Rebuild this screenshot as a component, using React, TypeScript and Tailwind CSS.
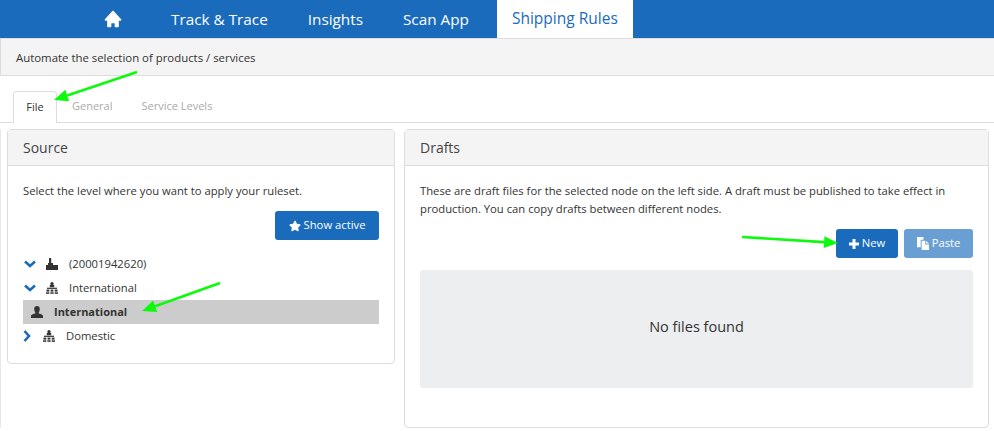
import { FaStar } from 'react-icons/fa';
import { BiSolidHome } from 'react-icons/bi';

const NAV = ['Track & Trace', 'Insights', 'Scan App'];

function Chevron({ open }: { open?: boolean }) {
  if (open) {
    return (
      <svg viewBox="0 0 12 8" className="ml-[1px] h-[8px] w-[12px] text-[#1a6bbb]" fill="none" stroke="currentColor" strokeWidth="2.6">
        <path d="M1 1.500l5 4.500 5-4.500" />
      </svg>
    );
  }
  return (
    <svg viewBox="0 0 8 12" className="h-[12px] w-[8px] text-[#1a6bbb]" fill="none" stroke="currentColor" strokeWidth="2.6">
      <path d="M1.500 1l4.500 5-4.500 5" />
    </svg>
  );
}

function FactoryIcon({ className }: { className?: string }) {
  return (
    <svg viewBox="0 0 12 12" className={className} fill="currentColor">
      <path d="M3 0h2.200v5H7v2h5v5H0V7h2V5h1z" />
    </svg>
  );
}

function TreeIcon({ className }: { className?: string }) {
  return (
    <svg viewBox="0 0 12 12" className={className} fill="currentColor">
      <circle cx="6" cy="1.600" r="1.600" />
      <rect x="3.800" y="2.800" width="4.400" height="2.400" />
      <rect x="1" y="5.700" width="10" height="1.200" />
      <rect x="0.500" y="7.600" width="2.800" height="2" />
      <rect x="4.600" y="7.600" width="2.800" height="2" />
      <rect x="8.700" y="7.600" width="2.800" height="2" />
      <rect x="0" y="10.300" width="3.300" height="1.500" />
      <rect x="4.350" y="10.300" width="3.300" height="1.500" />
      <rect x="8.700" y="10.300" width="3.300" height="1.500" />
    </svg>
  );
}

function UserIcon({ className }: { className?: string }) {
  return (
    <svg viewBox="0 0 12 12" className={className} fill="currentColor">
      <path d="M6 0c1.700 0 2.800 1.200 2.800 3S7.800 6.400 7.400 7.200c1.800.8 4.600 1 4.600 3V12H0v-1.800c0-2 2.800-2.200 4.600-3C4.200 6.400 3.200 4.800 3.200 3S4.300 0 6 0z" />
    </svg>
  );
}

function PlusIcon({ className }: { className?: string }) {
  return (
    <svg viewBox="0 0 10 10" className={className} fill="currentColor">
      <path d="M3.500 0h3v3.500H10v3H6.500V10h-3V6.500H0v-3h3.500z" />
    </svg>
  );
}

function PasteIcon({ className }: { className?: string }) {
  return (
    <svg viewBox="0 0 13 14" className={className} fill="currentColor">
      <path d="M0 0h7v3H4v8H0z" />
      <path d="M5 4h4v4h4v6H5z" />
      <path d="M10 4l3 3h-3z" />
    </svg>
  );
}

function Arrow({ x1, y1, x2, y2 }: { x1: number; y1: number; x2: number; y2: number }) {
  const a = Math.atan2(y2 - y1, x2 - x1);
  const len = 14;
  const w = 6;
  const bx = x2 - Math.cos(a) * len;
  const by = y2 - Math.sin(a) * len;
  const px = -Math.sin(a) * w;
  const py = Math.cos(a) * w;
  return (
    <g fill="#0dfa0d" stroke="#0dfa0d">
      <line x1={x1} y1={y1} x2={bx} y2={by} strokeWidth="2.6" />
      <polygon points={`${x2},${y2} ${bx + px},${by + py} ${bx - px},${by - py}`} strokeWidth="0" />
    </g>
  );
}

export default function App() {
  return (
    <div className="relative h-[431px] w-[994px] overflow-hidden bg-white text-[11.25px] text-[#333] font-['Open_Sans',sans-serif]">
      <nav className="flex h-[38px] bg-[#1a6bbb] pl-[84px] text-[15.3px] text-white">
        <a className="mr-[9px] flex w-[58px] items-center justify-center"><BiSolidHome className="h-[20px] w-[20px]" /></a>
        {NAV.map((n) => (
          <a key={n} className="flex items-center px-[20px]">{n}</a>
        ))}
        <a className="ml-[8px] flex items-center bg-white px-[15px] text-[15.5px] text-[#1a6bbb]">Shipping Rules</a>
      </nav>

      <div className="flex h-[38px] items-center border-y border-l border-[#ddd] bg-[#f4f4f4] pl-[15px] pt-[2px] text-[11.4px]">
        Automate the selection of products / services
      </div>

      <div className="mt-[15px] flex h-[32px] border-b border-[#ddd] pl-[13px] text-[11px]">
        <div className="flex h-[32px] w-[44px] items-center justify-center rounded-t border border-b-0 border-[#ddd] bg-white">File</div>
        <div className="flex items-center pl-[15px] text-[#aaa]">General</div>
        <div className="flex items-center pl-[29px] text-[#aaa]">Service Levels</div>
      </div>

      <div className="mt-[6px] flex items-start gap-[9px] border-l border-[#e8e8e8] pl-[6px]">
        <section className="h-[235px] w-[388px] rounded border border-[#ddd] bg-white">
          <h2 className="flex h-[36px] items-center border-b border-[#ddd] bg-[#f4f4f4] pl-[15px] text-[14px] font-normal text-[#444]">Source</h2>
          <div className="px-[15px] pt-[16px]">
            <p className="leading-[18px]">Select the level where you want to apply your ruleset.</p>
            <div className="mt-[11px] flex justify-end">
              <button className="flex h-[29px] w-[104px] items-center justify-center gap-[3px] rounded-[3px] bg-[#1a6bbb] text-white">
                <FaStar className="h-[12px] w-[12px]" />
                Show active
              </button>
            </div>
            <ul className="mt-[12px]">
              <li className="flex h-[24px] items-center">
                <Chevron open />
                <FactoryIcon className="ml-[10px] h-[12px] w-[12px]" />
                <span className="ml-[11px]">(20001942620)</span>
              </li>
              <li className="flex h-[24px] items-center">
                <Chevron open />
                <TreeIcon className="ml-[10px] h-[12px] w-[12px]" />
                <span className="ml-[11px]">International</span>
              </li>
              <li className="flex h-[24px] items-center bg-[#ccc] text-[11px] font-bold">
                <UserIcon className="ml-[8px] h-[12px] w-[12px]" />
                <span className="ml-[11px]">International</span>
              </li>
              <li className="flex h-[24px] items-center">
                <Chevron />
                <TreeIcon className="ml-[12px] h-[12px] w-[12px]" />
                <span className="ml-[11px]">Domestic</span>
              </li>
            </ul>
          </div>
        </section>

        <section className="h-[299px] w-[585px] rounded border border-[#ddd] bg-white">
          <h2 className="flex h-[36px] items-center border-b border-[#ddd] bg-[#f4f4f4] pl-[15px] text-[14px] font-normal text-[#444]">Drafts</h2>
          <div className="px-[15px] pt-[16px]">
            <p className="leading-[18px]">These are draft files for the selected node on the left side. A draft must be published to take effect in production. You can copy drafts between different nodes.</p>
            <div className="mt-[11px] flex justify-end gap-[6px]">
              <button className="flex h-[29px] w-[62px] items-center justify-center gap-[3px] rounded-[3px] bg-[#1a6bbb] text-white">
                <PlusIcon className="h-[10px] w-[10px]" />
                New
              </button>
              <button className="flex h-[29px] w-[69px] items-center justify-center gap-[3px] rounded-[3px] bg-[#6a9fd3] text-white">
                <PasteIcon className="h-[13px] w-[12px]" />
                Paste
              </button>
            </div>
            <div className="mt-[12px] flex h-[118px] items-center justify-center rounded-[3px] bg-[#eceef0] pb-[4px] text-[14.5px]">No files found</div>
          </div>
        </section>
      </div>

      <svg className="pointer-events-none absolute inset-0 h-[431px] w-[994px]">
        <Arrow x1={137} y1={72} x2={54} y2={100} />
        <Arrow x1={220} y1={283} x2={142} y2={311} />
        <Arrow x1={742} y1={237} x2={838} y2={243} />
      </svg>
    </div>
  );
}
